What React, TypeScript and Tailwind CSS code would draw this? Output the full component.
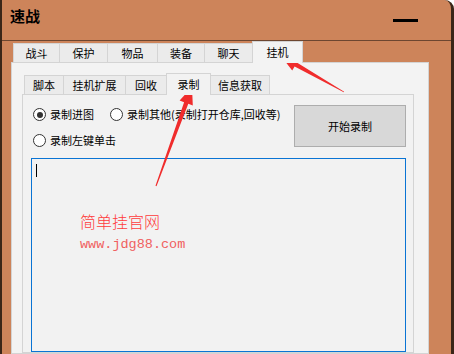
import React from "react";

const OUTER_TABS = [
  { label: "战斗", w: "w-[47px]" },
  { label: "保护", w: "w-[49px]" },
  { label: "物品", w: "w-[51px]" },
  { label: "装备", w: "w-[48px]" },
  { label: "聊天", w: "w-[49px]" },
];

const INNER_TABS = [
  { label: "脚本", w: "w-[40px]" },
  { label: "挂机扩展", w: "w-[63px]" },
  { label: "回收", w: "w-[42px]" },
];

function Radio({ checked, label, className = "" }: { checked?: boolean; label: string; className?: string }) {
  return (
    <div className={`flex items-center h-[13px] ${className}`}>
      <span className="w-[13px] h-[13px] rounded-full border border-[#333] bg-white flex items-center justify-center shrink-0">
        {checked && <span className="w-[6px] h-[6px] rounded-full bg-[#333]" />}
      </span>
      <span className="ml-[4px] text-[11px] leading-[13px] text-black whitespace-nowrap">{label}</span>
    </div>
  );
}

export default function App() {
  return (
    <div className="relative w-[454px] h-[354px] bg-white overflow-hidden font-['Noto_Sans_CJK_SC',sans-serif]">
      <div className="flex flex-col w-[454px] h-[354px] bg-[#cd845a] border-l-2 border-r-[3px] border-[#3b2618] rounded-tr-[9px] overflow-hidden">
        {/* Title bar */}
        <div className="h-[40px] flex justify-between pl-[8px] pr-[33px] shrink-0">
          <span className="mt-[6px] text-[15px] font-bold leading-[20px] text-black">速战</span>
          <span className="mt-[19px] w-[25px] h-[3px] bg-black" />
        </div>
        <div className="h-px bg-[#6d4630] shrink-0" />

        {/* Outer tab control */}
        <div className="flex-1 pl-[9px] flex flex-col">
          <div className="w-[418px] flex flex-col flex-1">
            <div className="h-[21px] flex items-end pl-[2px] shrink-0">
              {OUTER_TABS.map(t => (
                <div
                  key={t.label}
                  className={`${t.w} h-[19px] -ml-px first:ml-0 border border-b-0 border-[#d4d4d4] bg-[#ebebeb] flex items-center justify-center text-[11px] text-black`}
                >
                  {t.label}
                </div>
              ))}
              <div className="w-[51px] h-[22px] -mb-px -ml-px relative z-10 border border-b-0 border-[#d4d4d4] bg-[#f3f3f3] flex items-center justify-center text-[11px] text-black">
                挂机
              </div>
            </div>

            <div className="flex-1 border border-[#d4d4d4] bg-[#f3f3f3] pl-[10px] pr-[14px] pt-[10px] flex flex-col">
              {/* Inner tabs */}
              <div className="h-[21px] flex items-end pl-[2px] shrink-0">
                {INNER_TABS.map(t => (
                  <div
                    key={t.label}
                    className={`${t.w} h-[19px] -ml-px first:ml-0 border border-b-0 border-[#d4d4d4] bg-[#ebebeb] flex items-center justify-center text-[11px] text-black`}
                  >
                    {t.label}
                  </div>
                ))}
                <div className="w-[45px] h-[22px] -mb-px -ml-px relative z-10 border border-b-0 border-[#d4d4d4] bg-[#f2f2f2] flex items-center justify-center text-[11px] text-black">
                  录制
                </div>
                <div className="w-[60px] h-[19px] -ml-px border border-b-0 border-[#d4d4d4] bg-[#ebebeb] flex items-center justify-center text-[11px] text-black">
                  信息获取
                </div>
              </div>

              {/* Inner panel */}
              <div className="flex-1 border border-[#d4d4d4] bg-[#f2f2f2] pl-[8px] pr-[7px] flex flex-col">
                <div className="flex justify-between mt-[10px] h-[53px] shrink-0">
                  <div className="pl-[2px] pt-[3px] flex flex-col gap-[13px]">
                    <div className="flex">
                      <Radio checked label="录制进图" className="w-[77px]" />
                      <Radio label="录制其他(录制打开仓库,回收等)" />
                    </div>
                    <Radio label="录制左键单击" />
                  </div>
                  <button className="w-[112px] h-[42px] border border-[#adadad] bg-[#d8d8d8] text-[11px] text-black">
                    开始录制
                  </button>
                </div>
                <div className="flex-1 border border-[#0a74d4] bg-[#f2f2f2] pl-[4px] pt-[5px]">
                  <div className="w-px h-[13px] bg-black" />
                </div>
              </div>
            </div>
          </div>
        </div>
      </div>

      {/* Watermark */}
      <div className="absolute left-[80px] top-[211px] text-[16px] font-light leading-[20px] text-[#ff3b3b]">简单挂官网</div>
      <div className="absolute left-[80px] top-[238px] text-[13.5px] leading-none text-[#f06060] font-['Liberation_Mono',monospace]">
        www.jdg88.com
      </div>

      {/* Annotation arrows */}
      <svg className="absolute left-0 top-0" width="454" height="354" viewBox="0 0 454 354">
        <polygon
          fill="#f02c2c"
          points="281,56 299.2,58.4 296.8,62.6 344.2,91.7 343.8,92.3 294.6,66.4 292.2,70.6"
        />
        <polygon
          fill="#f02c2c"
          points="192,87 192.8,105.4 188.3,103.8 156.5,186.2 155.5,185.8 184.1,102.2 179.6,100.6"
        />
      </svg>
    </div>
  );
}
